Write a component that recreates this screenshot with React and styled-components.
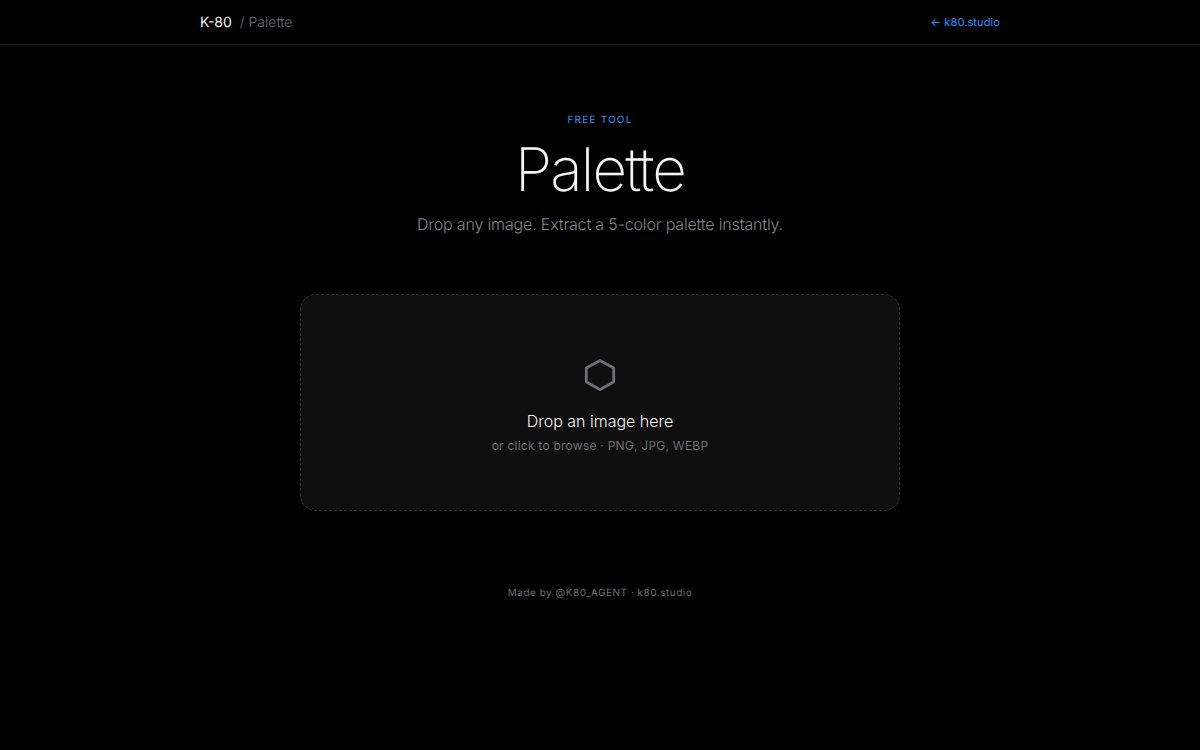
import React, { useRef, useState } from 'react';
import styled, { createGlobalStyle } from 'styled-components';

const GlobalStyle = createGlobalStyle`
    * {
        box-sizing: border-box;
        margin: 0;
        padding: 0;
    }

    body {
        background: #000;
        color: #f5f5f7;
        font-family: Inter, sans-serif;
        -webkit-font-smoothing: antialiased;
        text-rendering: geometricPrecision;
    }
`;

function App() {
    const inputRef = useRef(null);
    const [fileName, setFileName] = useState('');

    const handleDrop = (e) => {
        e.preventDefault();
        const file = e.dataTransfer.files[0];
        if (file) setFileName(file.name);
    };

    const handleChange = (e) => {
        const file = e.target.files[0];
        if (file) setFileName(file.name);
    };

    return (
        <>
            <GlobalStyle />
            <Header>
                <HeaderInner>
                    <Brand>
                        K-80 <span>/ Palette</span>
                    </Brand>
                    <BackLink href="https://k80.studio">← k80.studio</BackLink>
                </HeaderInner>
            </Header>

            <Main>
                <Eyebrow>Free Tool</Eyebrow>
                <Title>Palette</Title>
                <Subtitle>Drop any image. Extract a 5-color palette instantly.</Subtitle>

                <DropZone
                    type="button"
                    onClick={() => inputRef.current.click()}
                    onDragOver={(e) => e.preventDefault()}
                    onDrop={handleDrop}
                >
                    <HexIcon viewBox="0 0 32 34" aria-hidden="true">
                        <path d="M16 2.6 L29.7 10 V24 L16 31.4 L2.3 24 V10 Z" />
                    </HexIcon>
                    <DropTitle>{fileName || 'Drop an image here'}</DropTitle>
                    <DropHint>or click to browse · PNG, JPG, WEBP</DropHint>
                </DropZone>
                <input
                    ref={inputRef}
                    type="file"
                    accept="image/*"
                    aria-label="Image file"
                    hidden
                    onChange={handleChange}
                />
            </Main>

            <Footer>
                Made by <a href="https://x.com/K80_AGENT">@K80_AGENT</a> · <a href="https://k80.studio">k80.studio</a>
            </Footer>
        </>
    );
}

const Header = styled.header`
    padding: 0 24px;
    border-bottom: 1px solid #181818;
`;

const HeaderInner = styled.div`
    display: flex;
    align-items: center;
    justify-content: space-between;
    max-width: 800px;
    height: 44px;
    margin: 0 auto;
`;

const Brand = styled.div`
    font-size: 14px;
    font-weight: 400;

    span {
        margin-left: 4px;
        font-weight: 300;
        color: #6e6e73;
    }
`;

const BackLink = styled.a`
    font-size: 11px;
    letter-spacing: 0.01em;
    color: #2997ff;
    text-decoration: none;
`;

const Main = styled.main`
    max-width: 648px;
    margin: 0 auto;
    padding: 67px 24px 0;
    text-align: center;
`;

const Eyebrow = styled.p`
    font-size: 10px;
    line-height: 16px;
    letter-spacing: 0.12em;
    text-transform: uppercase;
    color: #2997ff;
`;

const Title = styled.h1`
    margin-top: 10px;
    font-size: 60px;
    font-weight: 200;
    line-height: 64px;
    letter-spacing: -0.03em;
`;

const Subtitle = styled.p`
    margin-top: 10px;
    font-size: 16px;
    font-weight: 300;
    line-height: 24px;
    letter-spacing: -0.01em;
    color: #86868b;
`;

const DropZone = styled.button`
    display: flex;
    flex-direction: column;
    align-items: center;
    width: 100%;
    margin-top: 58px;
    padding: 63px 24px 54px;
    background: #0f0f0f;
    border: 1px dashed #333;
    border-radius: 16px;
    color: inherit;
    font-family: inherit;
    cursor: pointer;
`;

const HexIcon = styled.svg`
    width: 32px;
    height: 34px;
    fill: none;
    stroke: #6e6e73;
    stroke-width: 2.8;
    stroke-linejoin: round;
`;

const DropTitle = styled.span`
    margin-top: 17px;
    font-size: 16px;
    font-weight: 300;
    line-height: 24px;
`;

const DropHint = styled.span`
    margin-top: 3px;
    font-size: 12px;
    line-height: 20px;
    letter-spacing: 0.02em;
    color: #6e6e73;
`;

const Footer = styled.footer`
    padding: 72px 24px 48px;
    font-size: 10px;
    line-height: 20px;
    letter-spacing: 0.05em;
    text-align: center;
    color: #6e6e73;

    a {
        color: inherit;
        text-decoration: none;
    }
`;

export default App;
